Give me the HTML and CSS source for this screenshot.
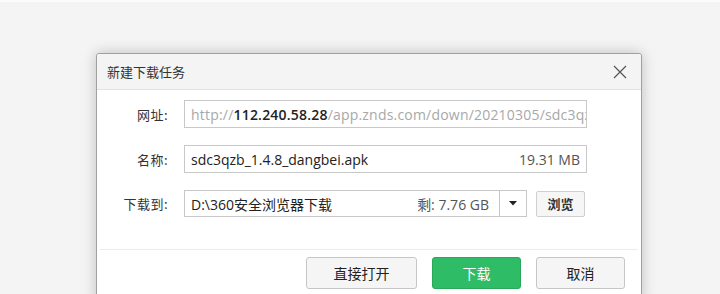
FILE: index.html
```html
<!DOCTYPE html>
<html lang="zh-CN">
<head>
<meta charset="utf-8">
<title>新建下载任务</title>
<link rel="stylesheet" href="styles.css">
</head>
<body>
<div class="page">
  <div class="dialog">
    <div class="header">
      <span class="title">新建下载任务</span>
      <svg class="close" width="14" height="14" viewBox="0 0 14 14"><path d="M1 1L13 13M13 1L1 13" stroke="#555" stroke-width="1.2" fill="none"/></svg>
    </div>
    <div class="body">
      <div class="row">
        <span class="label">网址:</span>
        <div class="field url"><span class="muted">http://</span><b class="host">112.240.58.28</b><span class="muted">/app.znds.com/down/20210305/sdc3qzb_1.4.8_dangbei.apk</span></div>
      </div>
      <div class="row">
        <span class="label">名称:</span>
        <div class="field name"><span class="grow">sdc3qzb_1.4.8_dangbei.apk</span><span class="size">19.31 MB</span></div>
      </div>
      <div class="row row3">
        <span class="label">下载到:</span>
        <div class="combo">
          <div class="field path"><span class="grow">D:\360安全浏览器下载</span><span class="size">剩: 7.76 GB</span></div>
          <div class="drop"><svg width="8" height="5" viewBox="0 0 8 5"><path d="M0 0H8L4 4.5Z" fill="#222"/></svg></div>
        </div>
        <button class="browse">浏览</button>
      </div>
    </div>
    <div class="footer">
      <button class="btn wide">直接打开</button>
      <button class="btn primary">下载</button>
      <button class="btn">取消</button>
    </div>
  </div>
</div>
</body>
</html>
```

FILE: styles.css
```css
html, body {
  margin: 0;
  padding: 0;
}
body {
  width: 720px;
  height: 294px;
  overflow: hidden;
  background: #f4f4f4;
  border-top: 2px solid #fbfbfb;
  box-sizing: border-box;
  font-family: "Noto Sans CJK SC", "Microsoft YaHei", sans-serif;
  color: #333;
}
.page {
  padding: 51px 0 0 96px;
}
.dialog {
  width: 546px;
  box-sizing: border-box;
  border: 1px solid #a0a0a0;
  border-radius: 3px 3px 0 0;
  background: #fff;
  box-shadow: 0 0 14px rgba(0, 0, 0, 0.22);
}
.header {
  height: 35px;
  background: #f4f4f4;
  border-bottom: 1px solid #e2e2e2;
  display: flex;
  align-items: center;
  justify-content: space-between;
  padding: 0 14px 0 10px;
  border-radius: 3px 3px 0 0;
}
.title {
  font-size: 13px;
  color: #333;
  line-height: 1;
}
.close {
  display: block;
}
.body {
  padding: 10px 0 0 0;
  display: flex;
  flex-direction: column;
  gap: 17px;
}
.row {
  display: flex;
  align-items: center;
  height: 28px;
}
.label {
  width: 71px;
  text-align: right;
  font-size: 13px;
  color: #333;
  margin-right: 16px;
  letter-spacing: 0.5px;
}
.field {
  box-sizing: border-box;
  height: 28px;
  border: 1px solid #c8c8c8;
  display: flex;
  align-items: center;
  padding: 0 6px;
  font-family: "Open Sans", "Noto Sans CJK SC", sans-serif;
  font-size: 14px;
  white-space: nowrap;
  overflow: hidden;
  color: #222;
}
.url {
  width: 403px;
  letter-spacing: 0.2px;
}
.muted {
  color: #a8a8a8;
}
.host {
  color: #222;
  font-weight: 600;
}
.name {
  width: 403px;
}
.grow {
  flex: 1;
}
.size {
  color: #555;
}
.row3 {
  height: 27px;
}
.combo {
  display: flex;
  height: 27px;
}
.path {
  width: 316px;
  height: 27px;
  padding-right: 10px;
}
.drop {
  width: 27px;
  height: 27px;
  box-sizing: border-box;
  border: 1px solid #c8c8c8;
  border-left: none;
  display: flex;
  align-items: center;
  justify-content: center;
}
.browse {
  margin-left: 9px;
  width: 49px;
  height: 26px;
  border: 1px solid #d0d0d0;
  border-radius: 2px;
  background: #f6f6f6;
  font-family: "Noto Sans CJK SC", sans-serif;
  font-size: 13px;
  font-weight: 700;
  color: #333;
  padding: 0;
}
.footer {
  margin: 32px 3px 0 3px;
  border-top: 1px solid #ececec;
  padding: 7px 13px 12px 0;
  display: flex;
  justify-content: flex-end;
  gap: 15px;
}
.btn {
  width: 89px;
  height: 32px;
  border: 1px solid #c6c6c6;
  border-radius: 3px;
  background: #f5f5f5;
  font-family: "Noto Sans CJK SC", sans-serif;
  font-size: 14px;
  color: #222;
  padding: 0;
}
.wide {
  width: 111px;
}
.primary {
  background: #2fbc66;
  border-color: #28a95a;
  color: #fff;
}
```
